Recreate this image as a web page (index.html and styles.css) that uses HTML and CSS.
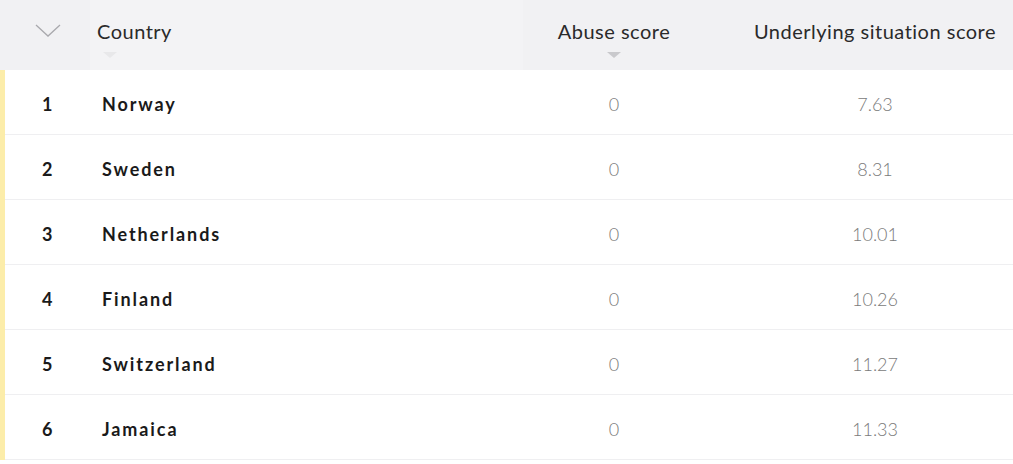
FILE: index.html
```html
<!DOCTYPE html>
<html lang="en">
<head>
  <meta charset="UTF-8">
  <title>Ranking</title>
  <link rel="stylesheet" href="styles.css">
</head>
<body>

<div class="table">
  <div class="row head">
    <div class="cell toggle">
      <svg width="26" height="14" viewBox="0 0 26 14"><path d="M1 1 L13 12 L25 1" fill="none" stroke="#a9a9ad" stroke-width="1.3"/></svg>
    </div>
    <div class="cell name-col">
      Country
      <span class="sort faint"></span>
    </div>
    <div class="cell num-col">
      Abuse score
      <span class="sort"></span>
    </div>
    <div class="cell num-col last">Underlying situation score</div>
  </div>

  <div class="body">
    <div class="row"><div class="cell rank">1</div><div class="cell country">Norway</div><div class="cell value">0</div><div class="cell value last">7.63</div></div>
    <div class="row"><div class="cell rank">2</div><div class="cell country">Sweden</div><div class="cell value">0</div><div class="cell value last">8.31</div></div>
    <div class="row"><div class="cell rank">3</div><div class="cell country">Netherlands</div><div class="cell value">0</div><div class="cell value last">10.01</div></div>
    <div class="row"><div class="cell rank">4</div><div class="cell country">Finland</div><div class="cell value">0</div><div class="cell value last">10.26</div></div>
    <div class="row"><div class="cell rank">5</div><div class="cell country">Switzerland</div><div class="cell value">0</div><div class="cell value last">11.27</div></div>
    <div class="row"><div class="cell rank">6</div><div class="cell country">Jamaica</div><div class="cell value">0</div><div class="cell value last">11.33</div></div>
  </div>
</div>

</body>
</html>
```

FILE: styles.css
```css
body {
  margin: 0;
  background-color: white;
  font-family: Lato, "Open Sans", sans-serif;
  color: #1a1a1a;
}

.table {
  width: 1013px;
}

.row {
  display: grid;
  grid-template-columns: 90px 433px 182px 1fr;
  height: 65px;
  border-bottom: 1px solid #efeff1;
  box-sizing: border-box;
}

.head {
  height: 70px;
  background-color: #f1f1f3;
  border-bottom: none;
}

.head .cell {
  position: relative;
  font-size: 20px;
  font-weight: 400;
  letter-spacing: 0.5px;
  color: #2a2a2a;
  padding-top: 19px;
  box-sizing: border-box;
}

.head .name-col {
  background-color: #f3f3f5;
  padding-left: 7px;
}

.head .num-col {
  text-align: center;
}

.head .last {
  padding-left: 32px;
  white-space: nowrap;
}

.toggle {
  padding-left: 35px;
}

.toggle svg {
  display: block;
  margin-top: 5px;
}

.sort {
  position: absolute;
  left: 50%;
  top: 52px;
  margin-left: -7px;
  width: 0;
  height: 0;
  border-left: 7px solid transparent;
  border-right: 7px solid transparent;
  border-top: 6px solid #c9c9cc;
}

.sort.faint {
  left: 13px;
  margin-left: 0;
  border-top-color: #e8e8ea;
}

.body {
  border-left: 5px solid #fcedaa;
}

.body .row {
  grid-template-columns: 85px 433px 182px 1fr;
  align-items: center;
  padding-top: 3px;
}

.rank {
  font-size: 18px;
  font-weight: 700;
  padding-left: 37px;
}

.country {
  font-size: 18px;
  font-weight: 700;
  letter-spacing: 1.9px;
  padding-left: 12px;
}

.value {
  text-align: center;
  font-size: 18px;
  font-weight: 300;
  color: #7a7a7a;
}

.value.last {
  padding-left: 32px;
}
```
